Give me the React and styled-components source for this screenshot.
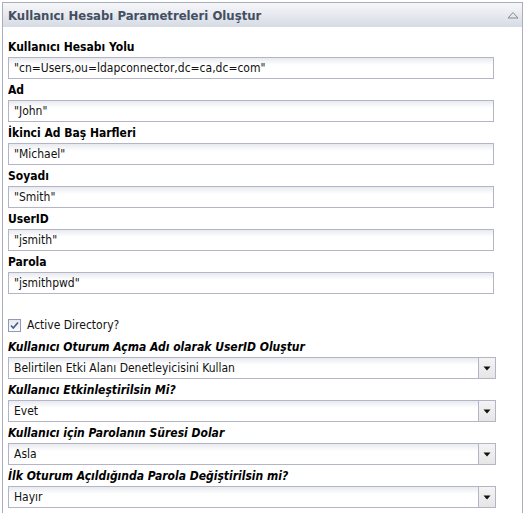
import React from "react";
import styled, { createGlobalStyle } from "styled-components";

const GlobalStyle = createGlobalStyle`
  body {
    margin: 0;
    background: #ffffff;
    font-family: "DejaVu Sans Condensed", "DejaVu Sans", sans-serif;
  }
`;

const fields = [
  { label: "Kullanıcı Hesabı Yolu", value: '"cn=Users,ou=ldapconnector,dc=ca,dc=com"' },
  { label: "Ad", value: '"John"' },
  { label: "İkinci Ad Baş Harfleri", value: '"Michael"' },
  { label: "Soyadı", value: '"Smith"' },
  { label: "UserID", value: '"jsmith"' },
  { label: "Parola", value: '"jsmithpwd"' },
];

const choices = [
  { label: "Kullanıcı Oturum Açma Adı olarak UserID Oluştur", value: "Belirtilen Etki Alanı Denetleyicisini Kullan" },
  { label: "Kullanıcı Etkinleştirilsin Mi?", value: "Evet" },
  { label: "Kullanıcı için Parolanın Süresi Dolar", value: "Asla" },
  { label: "İlk Oturum Açıldığında Parola Değiştirilsin mi?", value: "Hayır" },
];

function App() {
  return (
    <>
      <GlobalStyle />
      <Panel>
        <Header>
          <Title>Kullanıcı Hesabı Parametreleri Oluştur</Title>
          <svg width="12" height="8" viewBox="0 0 12 8">
            <path d="M1 7 L6 1.5 L11 7 Z" fill="none" stroke="#8a8a8a" strokeWidth="1" />
          </svg>
        </Header>
        <Body>
          {fields.map((f) => (
            <Field key={f.label}>
              <Label>{f.label}</Label>
              <TextBox readOnly value={f.value} />
            </Field>
          ))}
          <CheckRow>
            <CheckBox>
              <svg width="11" height="11" viewBox="0 0 11 11">
                <path d="M2 5.5 L4.3 8 L9 2.5" fill="none" stroke="#4b5a86" strokeWidth="1.6" />
              </svg>
            </CheckBox>
            <CheckText>Active Directory?</CheckText>
          </CheckRow>
          {choices.map((c) => (
            <Field key={c.label}>
              <Label $italic>{c.label}</Label>
              <SelectBox>
                <SelectText>{c.value}</SelectText>
                <ArrowButton>
                  <svg width="8" height="5" viewBox="0 0 8 5">
                    <path d="M0.5 0.5 L7.5 0.5 L4 4.5 Z" fill="#111" />
                  </svg>
                </ArrowButton>
              </SelectBox>
            </Field>
          ))}
        </Body>
      </Panel>
    </>
  );
}

const Panel = styled.div`
  margin: 2px 0 0 2px;
  width: 519px;
  border: 1px solid #a9adbd;
  border-bottom: none;
  height: 520px;
  overflow: hidden;
`;

const Header = styled.div`
  height: 24px;
  display: flex;
  align-items: center;
  justify-content: space-between;
  padding: 0 3px 0 5px;
  background: linear-gradient(#f6f7f9, #d6dbe4);
`;

const Title = styled.div`
  font-size: 13px;
  font-weight: bold;
  color: #434f62;
`;

const Body = styled.div`
  padding: 9px 0 0 5px;
`;

const Field = styled.div`
  display: flex;
  flex-direction: column;
`;

const Label = styled.div`
  font-size: 12px;
  font-weight: bold;
  font-style: ${(p) => (p.$italic ? "italic" : "normal")};
  color: #000;
  line-height: 14px;
  padding: 4px 0 3px 0;
`;

const TextBox = styled.input`
  box-sizing: border-box;
  width: 486px;
  height: 22px;
  margin: 0;
  padding: 0 5px;
  border: 1px solid #b3b5c7;
  background: linear-gradient(#e9eaef 0, #ffffff 7px);
  font-family: "DejaVu Sans Condensed", "DejaVu Sans", sans-serif;
  font-size: 12px;
  color: #111;
  outline: none;
`;

const CheckRow = styled.div`
  display: flex;
  align-items: center;
  gap: 6px;
  height: 22px;
  margin-top: 20px;
`;

const CheckBox = styled.div`
  box-sizing: border-box;
  width: 13px;
  height: 13px;
  border: 1px solid #8f9ab3;
  background: linear-gradient(#e6e9f1, #fafbfd);
  display: flex;
  align-items: center;
  justify-content: center;
`;

const CheckText = styled.span`
  font-size: 12px;
  color: #111;
`;

const SelectBox = styled.div`
  box-sizing: border-box;
  width: 488px;
  height: 22px;
  display: flex;
  border: 1px solid #b3b5c7;
  background: linear-gradient(#e9eaef 0, #ffffff 7px);
`;

const SelectText = styled.div`
  flex: 1;
  padding-left: 5px;
  font-size: 12px;
  line-height: 20px;
  color: #111;
`;

const ArrowButton = styled.div`
  width: 16px;
  border-left: 1px solid #b3b5c7;
  background: linear-gradient(#f4f4f4, #e6e6e6);
  display: flex;
  align-items: center;
  justify-content: center;
`;

export default App;
